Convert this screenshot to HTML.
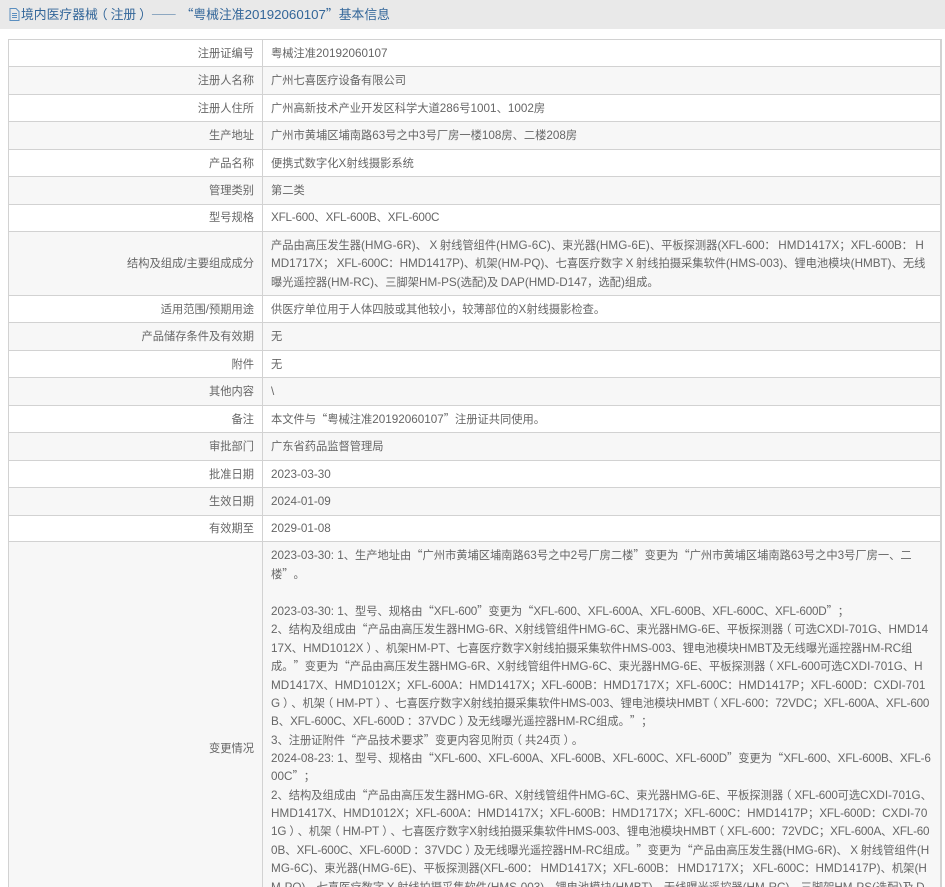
<!DOCTYPE html>
<html lang="zh-CN">
<head>
<meta charset="utf-8">
<title>境内医疗器械（注册）基本信息</title>
<style>
html,body{margin:0;padding:0;background:#fff;width:945px;height:887px;overflow:hidden}
body{position:relative;font-family:"Noto Sans CJK SC","Liberation Sans",sans-serif;font-size:11.25px;color:#666;text-spacing-trim:space-all}
i,var{font-family:"Liberation Sans","Noto Sans CJK SC",sans-serif;font-style:normal;font-size:11.7px}
var{letter-spacing:-.22px}
b{font-family:"Noto Sans CJK TC",sans-serif;font-weight:normal}
s,u{text-decoration:none;position:relative}
s{left:-3px}
u{left:3px}
.w1 i{letter-spacing:.07px}
.w2 i{letter-spacing:-.1px}
.w3 i{letter-spacing:.1px}
#hd{position:absolute;left:0;top:0;width:945px;height:29px;background:#e9e9e9}
#tt{position:absolute;left:21px;top:5px;line-height:18px;font-size:12.8px;color:#336699;white-space:nowrap}
#tt i{font-size:13.3px}
#ic{position:absolute;left:9px;top:8px}
.r{position:absolute;left:8px;width:933px;box-sizing:border-box;border-top:1px solid #d2d2d2}
.g{background:#f7f7f7}
.l{position:absolute;left:0;width:246px;text-align:right;line-height:18px;white-space:nowrap}
.v{position:absolute;left:263px;line-height:18px;white-space:nowrap}
#box{position:absolute;left:8px;top:39px;width:934px;height:860px;box-sizing:border-box;border-left:1px solid #d2d2d2;border-right:2px solid #d2d2d2;z-index:3}
#div{position:absolute;left:262px;top:39px;width:1px;height:860px;background:#d2d2d2;z-index:3}
</style>
</head>
<body>
<div id="hd"></div>
<svg id="ic" width="11" height="13" viewBox="0 0 11 13" fill="none" stroke="#5b8fc0" stroke-width="1"><path d="M1 .5H7L10 3.5V12.5H1Z"/><path d="M3 5.5H8M3 7.5H8M3 9.5H8"/></svg>
<div id="tt">境内医疗器械<s>（</s>注册<u>）</u><span style="margin-left:2px">——</span><span style="margin-left:4px">“</span>粤械注准<i>20192060107</i>”基本信息</div>

<div class="r" style="top:39px;height:27px"><div class="l" style="top:4px">注册证编号</div><div class="v" style="top:4px">粤械注准<i>20192060107</i></div></div>
<div class="r g" style="top:66px;height:28px"><div class="l" style="top:4px">注册人名称</div><div class="v" style="top:4px">广州七喜医疗设备有限公司</div></div>
<div class="r" style="top:94px;height:27px"><div class="l" style="top:4px">注册人住所</div><div class="v" style="top:4px">广州高新技术产业开发区科学大道<i>286</i>号<i>1001</i>、<i>1002</i>房</div></div>
<div class="r g" style="top:121px;height:28px"><div class="l" style="top:4px">生产地址</div><div class="v" style="top:4px">广州市黄埔区埔南路<i>63</i>号之中<i>3</i>号厂房一楼<i>108</i>房、二楼<i>208</i>房</div></div>
<div class="r" style="top:149px;height:27px"><div class="l" style="top:4px">产品名称</div><div class="v" style="top:4px">便携式数字化<i>X</i>射线摄影系统</div></div>
<div class="r g" style="top:176px;height:28px"><div class="l" style="top:4px">管理类别</div><div class="v" style="top:4px">第二类</div></div>
<div class="r" style="top:204px;height:27px"><div class="l" style="top:3px">型号规格</div><div class="v" style="top:3px"><var>XFL-600</var>、<var>XFL-600B</var>、<var>XFL-600C</var></div></div>
<div class="r g" style="top:231px;height:64px">
<div class="l" style="top:22px">结构及组成<i>/</i>主要组成成分</div>
<div class="v w3" style="top:4px">产品由高压发生器<i>(HMG-6R)</i>、 <i>X</i> 射线管组件<i>(HMG-6C)</i>、束光器<i>(HMG-6E)</i>、平板探测器<var>(XFL-600</var><b>：</b> <i>HMD1417X</i><b>；</b><var>XFL-600B</var><b>：</b> <i>H</i></div>
<div class="v" style="top:22px"><i>MD1717X</i><b>；</b> <var>XFL-600C</var><b>：</b><i>HMD1417P)</i>、机架<i>(HM-PQ)</i>、七喜医疗数字 <i>X</i> 射线拍摄采集软件<i>(HMS-003)</i>、锂电池模块<i>(HMBT)</i>、无线</div>
<div class="v" style="top:41px">曝光遥控器<i>(HM-RC)</i>、三脚架<i>HM-PS(</i>选配<i>)</i>及 <i>DAP(HMD-D147</i><b>，</b>选配<i>)</i>组成。</div>
</div>
<div class="r" style="top:295px;height:27px"><div class="l" style="top:4px">适用范围<i>/</i>预期用途</div><div class="v" style="top:4px">供医疗单位用于人体四肢或其他较小<b>，</b>较薄部位的<i>X</i>射线摄影检查。</div></div>
<div class="r g" style="top:322px;height:28px"><div class="l" style="top:4px">产品储存条件及有效期</div><div class="v" style="top:4px">无</div></div>
<div class="r" style="top:350px;height:27px"><div class="l" style="top:4px">附件</div><div class="v" style="top:4px">无</div></div>
<div class="r g" style="top:377px;height:28px"><div class="l" style="top:4px">其他内容</div><div class="v" style="top:4px"><i>\</i></div></div>
<div class="r" style="top:405px;height:27px"><div class="l" style="top:4px">备注</div><div class="v" style="top:4px">本文件与“粤械注准<i>20192060107</i>”注册证共同使用。</div></div>
<div class="r g" style="top:432px;height:28px"><div class="l" style="top:4px">审批部门</div><div class="v" style="top:4px">广东省药品监督管理局</div></div>
<div class="r" style="top:460px;height:27px"><div class="l" style="top:4px">批准日期</div><div class="v" style="top:4px"><i>2023-03-30</i></div></div>
<div class="r g" style="top:487px;height:28px"><div class="l" style="top:4px">生效日期</div><div class="v" style="top:4px"><i>2024-01-09</i></div></div>
<div class="r" style="top:515px;height:26px"><div class="l" style="top:3px">有效期至</div><div class="v" style="top:3px"><i>2029-01-08</i></div></div>
<div class="r g" style="top:541px;height:360px">
<div class="l" style="top:197px">变更情况</div>
<div class="v" style="top:4px"><i>2023-03-30: 1</i>、生产地址由“广州市黄埔区埔南路<i>63</i>号之中<i>2</i>号厂房二楼”变更为“广州市黄埔区埔南路<i>63</i>号之中<i>3</i>号厂房一、二</div>
<div class="v" style="top:23px">楼”。</div>
<div class="v" style="top:60px"><i>2023-03-30: 1</i>、型号、规格由“<var>XFL-600</var>”变更为“<var>XFL-600</var>、<var>XFL-600A</var>、<var>XFL-600B</var>、<var>XFL-600C</var>、<var>XFL-600D</var>”<b>；</b></div>
<div class="v" style="top:78px"><i>2</i>、结构及组成由“产品由高压发生器<i>HMG-6R</i>、<i>X</i>射线管组件<i>HMG-6C</i>、束光器<i>HMG-6E</i>、平板探测器<s>（</s>可选<i>CXDI-701G</i>、<i>HMD14</i></div>
<div class="v" style="top:97px"><i>17X</i>、<i>HMD1012X</i><u>）</u>、机架<i>HM-PT</i>、七喜医疗数字<i>X</i>射线拍摄采集软件<i>HMS-003</i>、锂电池模块<i>HMBT</i>及无线曝光遥控器<i>HM-RC</i>组</div>
<div class="v" style="top:115px">成。”变更为“产品由高压发生器<i>HMG-6R</i>、<i>X</i>射线管组件<i>HMG-6C</i>、束光器<i>HMG-6E</i>、平板探测器<s>（</s><var>XFL-600</var>可选<i>CXDI-701G</i>、<i>H</i></div>
<div class="v w1" style="top:134px"><i>MD1417X</i>、<i>HMD1012X</i><b>；</b><var>XFL-600A</var><b>：</b><i>HMD1417X</i><b>；</b><var>XFL-600B</var><b>：</b><i>HMD1717X</i><b>；</b><var>XFL-600C</var><b>：</b><i>HMD1417P</i><b>；</b><var>XFL-600D</var><b>：</b><i>CXDI-701</i></div>
<div class="v w2" style="top:152px"><i>G</i><u>）</u>、机架<s>（</s><i>HM-PT</i><u>）</u>、七喜医疗数字<i>X</i>射线拍摄采集软件<i>HMS-003</i>、锂电池模块<i>HMBT</i><s>（</s><var>XFL-600</var><b>：</b><i>72VDC</i><b>；</b><var>XFL-600A</var>、<var>XFL-600</var></div>
<div class="v" style="top:170px"><i>B</i>、<var>XFL-600C</var>、<var>XFL-600D</var> <b>：</b><i>37VDC</i><u>）</u>及无线曝光遥控器<i>HM-RC</i>组成。”<b>；</b></div>
<div class="v" style="top:189px"><i>3</i>、注册证附件“产品技术要求”变更内容见附页<s>（</s>共<i>24</i>页<u>）</u>。</div>
<div class="v" style="top:207px"><i>2024-08-23: 1</i>、型号、规格由“<var>XFL-600</var>、<var>XFL-600A</var>、<var>XFL-600B</var>、<var>XFL-600C</var>、<var>XFL-600D</var>”变更为“<var>XFL-600</var>、<var>XFL-600B</var>、<var>XFL-6</var></div>
<div class="v" style="top:225px"><i>00C</i>”<b>；</b></div>
<div class="v" style="top:244px"><i>2</i>、结构及组成由“产品由高压发生器<i>HMG-6R</i>、<i>X</i>射线管组件<i>HMG-6C</i>、束光器<i>HMG-6E</i>、平板探测器<s>（</s><var>XFL-600</var>可选<i>CXDI-701G</i>、</div>
<div class="v w1" style="top:262px"><i>HMD1417X</i>、<i>HMD1012X</i><b>；</b><var>XFL-600A</var><b>：</b><i>HMD1417X</i><b>；</b><var>XFL-600B</var><b>：</b><i>HMD1717X</i><b>；</b><var>XFL-600C</var><b>：</b><i>HMD1417P</i><b>；</b><var>XFL-600D</var><b>：</b><i>CXDI-70</i></div>
<div class="v w2" style="top:280px"><i>1G</i><u>）</u>、机架<s>（</s><i>HM-PT</i><u>）</u>、七喜医疗数字<i>X</i>射线拍摄采集软件<i>HMS-003</i>、锂电池模块<i>HMBT</i><s>（</s><var>XFL-600</var><b>：</b><i>72VDC</i><b>；</b><var>XFL-600A</var>、<var>XFL-60</var></div>
<div class="v" style="top:299px"><i>0B</i>、<var>XFL-600C</var>、<var>XFL-600D</var> <b>：</b><i>37VDC</i><u>）</u>及无线曝光遥控器<i>HM-RC</i>组成。”变更为“产品由高压发生器<i>(HMG-6R)</i>、 <i>X</i> 射线管组件<i>(H</i></div>
<div class="v w3" style="top:317px"><i>MG-6C)</i>、束光器<i>(HMG-6E)</i>、平板探测器<var>(XFL-600</var><b>：</b> <i>HMD1417X</i><b>；</b><var>XFL-600B</var><b>：</b> <i>HMD1717X</i><b>；</b> <var>XFL-600C</var><b>：</b><i>HMD1417P)</i>、机架<i>(H</i></div>
<div class="v" style="top:336px"><i>M-PQ)</i>、七喜医疗数字 <i>X</i> 射线拍摄采集软件<i>(HMS-003)</i>、锂电池模块<i>(HMBT)</i>、无线曝光遥控器<i>(HM-RC)</i>、三脚架<i>HM-PS(</i>选配<i>)</i>及 <i>D</i></div>
</div>
<div id="box"></div>
<div id="div"></div>
</body>
</html>
